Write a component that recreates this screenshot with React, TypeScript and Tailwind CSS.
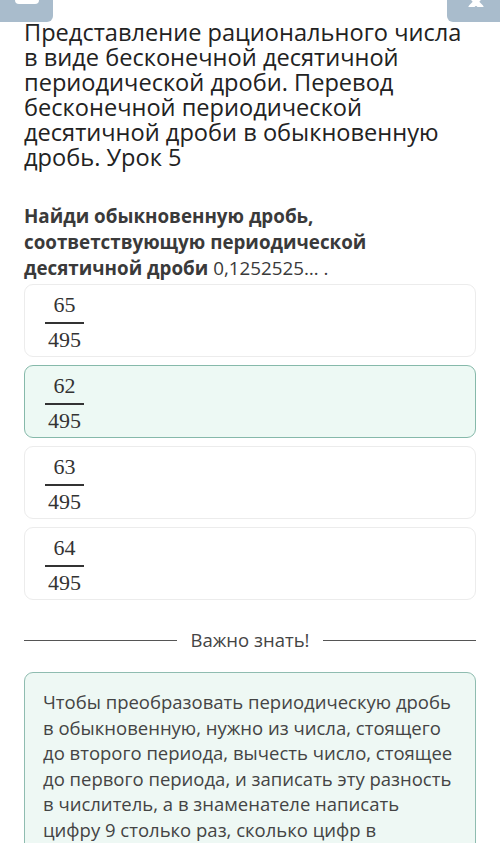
const options = [
  { num: "65", den: "495", selected: false },
  { num: "62", den: "495", selected: true },
  { num: "63", den: "495", selected: false },
  { num: "64", den: "495", selected: false },
];

const Fraction = ({ num, den }: { num: string; den: string }) => (
  <div className="inline-flex flex-col items-center font-['Liberation_Serif',serif] text-[22px] leading-none text-[#333]">
    <span className="px-[3px] pb-[6px]">{num}</span>
    <span className="w-full h-[1.5px] bg-[#333]" />
    <span className="px-[3px] pt-[5px]">{den}</span>
  </div>
);

const App = () => {
  return (
    <div className="w-[500px] h-[843px] overflow-hidden bg-white font-['Open_Sans',sans-serif] text-[#2b2b2b]">
      {/* Top bar */}
      <div className="flex justify-between h-[22px]">
        <div className="w-[53px] h-[22px] bg-[#a9bccc] rounded-br-[6px] flex justify-center">
          <span className="block w-[24px] h-[4px] bg-white rounded-b-sm" />
        </div>
        <div className="w-[53px] h-[22px] bg-[#a9bccc] rounded-bl-[6px] flex justify-center">
          <svg width="22" height="10" viewBox="0 0 22 10" className="mt-[-3px]">
            <path d="M4 -6 L13 5 M22 -6 L13 5 M13 5 L18 10 M13 5 L8 10" stroke="#fff" strokeWidth="5" strokeLinecap="round" />
          </svg>
        </div>
      </div>

      <div className="px-6">
        <h1 className="mt-[-2px] text-[23.6px] leading-[25px] text-[#222]">
          Представление рационального числа в виде бесконечной десятичной периодической дроби. Перевод бесконечной
          периодической десятичной дроби в обыкновенную дробь. Урок 5
        </h1>

        <p className="mt-[33px] w-[400px] text-[18.8px] leading-[26px] text-[#3a3a3a]">
          <span className="font-bold">Найди обыкновенную дробь, соответствующую периодической десятичной дроби</span>{" "}
          0,1252525… .
        </p>

        <div className="mt-[3px] flex flex-col gap-[8px]">
          {options.map((o) => (
            <div
              key={o.num}
              className={
                o.selected
                  ? "h-[73px] rounded-[9px] border border-[#86b9aa] bg-[#edf9f4] px-[20px] pt-[9px]"
                  : "h-[73px] rounded-[9px] border border-[#ececec] bg-white px-[20px] pt-[9px]"
              }
            >
              <Fraction num={o.num} den={o.den} />
            </div>
          ))}
        </div>

        <div className="mt-[27px] flex items-center gap-[14px]">
          <div className="flex-1 h-px bg-[#555]" />
          <span className="text-[18.5px] leading-[26px] text-[#444]">Важно знать!</span>
          <div className="flex-1 h-px bg-[#555]" />
        </div>

        <div className="mt-[19px] rounded-[9px] border border-[#8fbcb0] bg-[#eef8f4] px-[18px] pt-[16px] pb-6 text-[18.5px] leading-[25.6px] text-[#444]">
          Чтобы преобразовать периодическую дробь в обыкновенную, нужно из числа, стоящего до второго периода, вычесть
          число, стоящее до первого периода, и записать эту разность в числитель, а в знаменателе написать цифру 9
          столько раз, сколько цифр в периоде, и после девяток дописать столько нулей, сколько цифр между запятой и
          первым периодом.
        </div>
      </div>
    </div>
  );
};

export default App;
